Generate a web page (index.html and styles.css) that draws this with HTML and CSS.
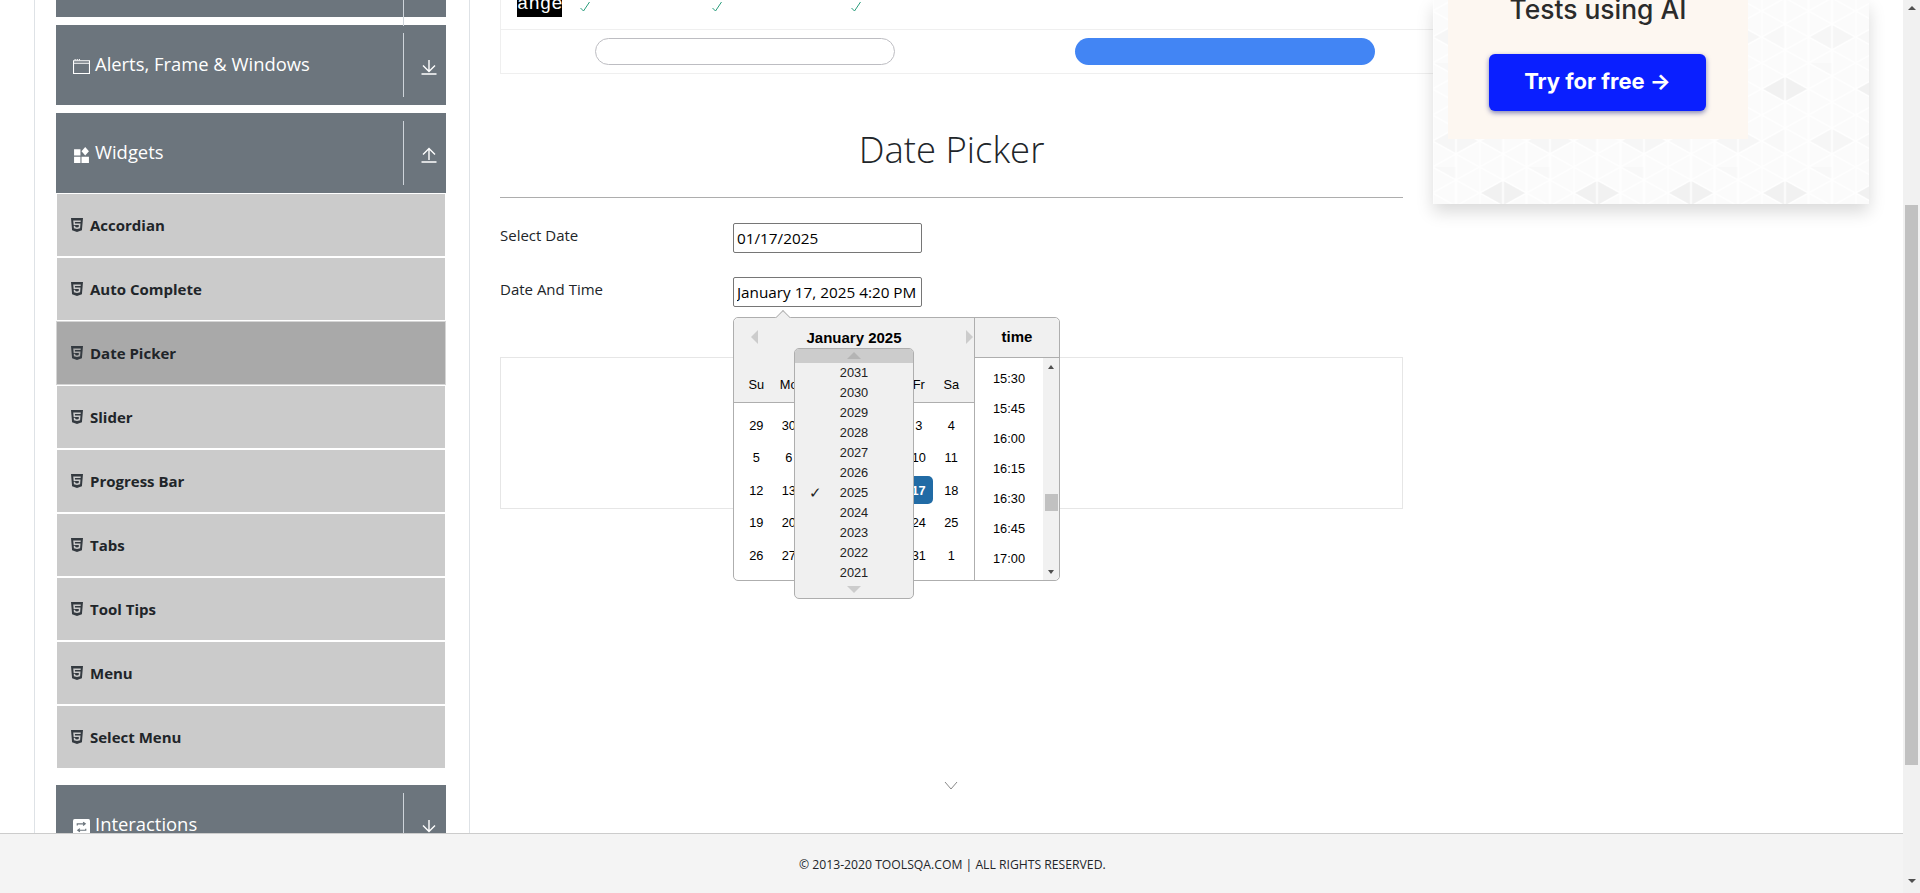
FILE: index.html
```html
<!DOCTYPE html>
<html>

<head>
    <meta charset='utf-8'>
    <title>ToolsQA - Date Picker</title>
    <link rel="stylesheet" href="styles.css">
</head>

<body>
  <svg class="defs" width="0" height="0">
    <symbol id="html5" viewBox="0 0 384 512">
      <path d="M0 32l34.9 395.8L191.5 480l157.6-52.2L384 32H0zm308.2 127.9H124.4l4.1 49.4h175.6l-13.6 148.4-97.9 27v.3h-1.1l-98.7-27.3-6-75.8h47.7L138 320l53.5 14.5 53.7-14.5 6-62.2H84.3L71.5 112.2h241.1l-4.4 47.7z"/>
    </symbol>
    <symbol id="arrow-down" viewBox="0 0 16 16">
      <path d="M8 1v10.500M2 6.500l6 6 6-6M.5 15h15" fill="none" stroke="#fff" stroke-width="1.400"/>
    </symbol>
    <symbol id="arrow-up" viewBox="0 0 16 16">
      <path d="M8 13V2.500M2 7.500l6-6 6 6M.5 15h15" fill="none" stroke="#fff" stroke-width="1.400"/>
    </symbol>
    <symbol id="check" viewBox="0 0 12 12">
      <path d="M1.5 7l3 3 6-9" fill="none" stroke="#2a9d7c" stroke-width="1"/>
    </symbol>
  </svg>

  <div class="page">
    <div class="frame">
      <div class="main">

        <div class="sidebar">
          <div class="group-head group-head-cut">
            <span class="head-title"></span>
            <span class="head-toggle"></span>
          </div>

          <div class="group-head">
            <span class="head-title">
              <svg class="head-icon" viewBox="0 0 16 16"><path d="M.5 2.500h15v12H.5zM.5 5h15" fill="none" stroke="#fff"/><path d="M1.500 1h1v1h-1zM3.500 1h1v1h-1zM5.500 1h1v1h-1z" fill="#fff"/></svg>
              Alerts, Frame &amp; Windows
            </span>
            <span class="head-toggle"><svg class="toggle-icon"><use href="#arrow-down"/></svg></span>
          </div>

          <div class="group-head group-open">
            <span class="head-title">
              <svg class="head-icon" viewBox="0 0 16 16"><path d="M1 3h6v6H1zM1 10h6v6H1zM8 10h7v6H8zM11.500 1l3.500 4-3.500 4L8 5z" fill="#fff"/></svg>
              Widgets
            </span>
            <span class="head-toggle"><svg class="toggle-icon"><use href="#arrow-up"/></svg></span>
          </div>
          <ul class="item-list">
            <li class="item"><svg class="item-icon"><use href="#html5"/></svg>Accordian</li>
            <li class="item"><svg class="item-icon"><use href="#html5"/></svg>Auto Complete</li>
            <li class="item item-active"><svg class="item-icon"><use href="#html5"/></svg>Date Picker</li>
            <li class="item"><svg class="item-icon"><use href="#html5"/></svg>Slider</li>
            <li class="item"><svg class="item-icon"><use href="#html5"/></svg>Progress Bar</li>
            <li class="item"><svg class="item-icon"><use href="#html5"/></svg>Tabs</li>
            <li class="item"><svg class="item-icon"><use href="#html5"/></svg>Tool Tips</li>
            <li class="item"><svg class="item-icon"><use href="#html5"/></svg>Menu</li>
            <li class="item"><svg class="item-icon"><use href="#html5"/></svg>Select Menu</li>
          </ul>

          <div class="group-head">
            <span class="head-title">
              <svg class="head-icon" viewBox="0 0 16 16"><rect y="1" width="16" height="15" rx="1.500" fill="#fff"/><path d="M4 7V5.500h7M9.500 4l2 1.500-2 1.500M12 10v1.500H5M6.500 10l-2 1.500 2 1.500" fill="none" stroke="#6c757d" stroke-width="1.100"/></svg>
              Interactions
            </span>
            <span class="head-toggle"><svg class="toggle-icon"><use href="#arrow-down"/></svg></span>
          </div>
        </div>

        <div class="content">
          <div class="compare">
            <div class="compare-row">
              <span class="compare-tag">ange</span>
              <svg class="tick tick-a"><use href="#check"/></svg>
              <svg class="tick tick-b"><use href="#check"/></svg>
              <svg class="tick tick-c"><use href="#check"/></svg>
            </div>
            <div class="compare-foot">
              <span class="pill pill-outline"></span>
              <span class="pill pill-blue"></span>
            </div>
          </div>

          <div class="section">
            <h1 class="title">Date Picker</h1>

            <div class="date-row">
              <label class="date-label">Select Date</label>
              <input class="date-input" type="text" value="01/17/2025">
            </div>

            <div class="date-row date-row-open">
              <label class="date-label">Date And Time</label>
              <input class="date-input" type="text" value="January 17, 2025 4:20 PM">

              <div class="picker">
                <span class="picker-tip"></span>
                <div class="month">
                  <div class="month-head">
                    <div class="month-nav">
                      <span class="nav-prev"></span>
                      <span class="month-name">January 2025</span>
                      <span class="nav-next"></span>
                    </div>
                    <div class="day-grid day-names">
                      <span>Su</span><span>Mo</span><span>Tu</span><span>We</span><span>Th</span><span>Fr</span><span>Sa</span>
                    </div>
                  </div>
                  <div class="day-grid days">
                    <span>29</span><span>30</span><span>31</span><span>1</span><span>2</span><span>3</span><span>4</span>
                    <span>5</span><span>6</span><span>7</span><span>8</span><span>9</span><span>10</span><span>11</span>
                    <span>12</span><span>13</span><span>14</span><span>15</span><span>16</span><span class="day-selected">17</span><span>18</span>
                    <span>19</span><span>20</span><span>21</span><span>22</span><span>23</span><span>24</span><span>25</span>
                    <span>26</span><span>27</span><span>28</span><span>29</span><span>30</span><span>31</span><span>1</span>
                  </div>
                </div>

                <div class="time">
                  <div class="time-head">time</div>
                  <div class="time-body">
                    <ul class="time-list">
                      <li>15:30</li><li>15:45</li><li>16:00</li><li>16:15</li><li>16:30</li><li>16:45</li><li>17:00</li>
                    </ul>
                    <div class="time-scroll">
                      <span class="mini-up"></span>
                      <span class="mini-thumb"></span>
                      <span class="mini-down"></span>
                    </div>
                  </div>
                </div>

                <div class="years">
                  <div class="years-up"><span></span></div>
                  <div class="year">2031</div>
                  <div class="year">2030</div>
                  <div class="year">2029</div>
                  <div class="year">2028</div>
                  <div class="year">2027</div>
                  <div class="year">2026</div>
                  <div class="year year-current">2025</div>
                  <div class="year">2024</div>
                  <div class="year">2023</div>
                  <div class="year">2022</div>
                  <div class="year">2021</div>
                  <div class="years-down"><span></span></div>
                </div>
              </div>
            </div>

            <div class="ad-box"></div>
            <svg class="chevron" viewBox="0 0 14 10"><path d="M1 1l6 7 6-7" fill="none" stroke="#888" stroke-width="1"/></svg>
          </div>
        </div>

        <div class="ad">
          <svg class="ad-pattern" width="100%" height="100%">
            <defs>
              <pattern id="tri" width="94" height="104" patternUnits="userSpaceOnUse" patternTransform="translate(46.500 63)">
                <rect width="94" height="104" fill="#fbfbfb"/>
                <path d="M0 26L23.500 13V39zM23.500 13L47 26 23.500 39z" fill="#f1f1f1"/>
                <path d="M47 78L70.500 65V91zM70.500 65L94 78 70.500 91z" fill="#f6f6f6"/>
                <path d="M47 0L70.500 13V-13zM0 78L23.500 91V65z" fill="#f8f8f8"/>
                <path d="M0 0v104M23.500 0v104M47 0v104M70.500 0v104M0 -52L94 0M0 -26L94 26M0 0L94 52M0 26L94 78M0 52L94 104M0 78L94 130M0 0L94 -52M0 26L94 -26M0 52L94 0M0 78L94 26M0 104L94 52M0 130L94 78" stroke="#fff" stroke-width="1.500" fill="none"/>
              </pattern>
            </defs>
            <rect width="100%" height="100%" fill="url(#tri)"/>
          </svg>
          <div class="ad-card">
            <div class="ad-text">Tests using AI</div>
            <div class="ad-btn">Try for free →</div>
          </div>
        </div>

      </div>

      <footer class="footer">© 2013-2020 TOOLSQA.COM | ALL RIGHTS RESERVED.</footer>
    </div>

    <div class="page-scroll">
      <span class="page-up"></span>
      <span class="page-thumb"></span>
      <span class="page-down"></span>
    </div>
  </div>
</body>

</html>
```

FILE: styles.css
```css
* {
  box-sizing: border-box;
}

body {
  margin: 0;
  height: 100vh;
  overflow: hidden;
  font-family: "Open Sans", sans-serif;
  color: #212529;
  background-color: #fff;
}

.defs {
  position: absolute;
}

.page {
  display: flex;
  height: 100%;
}

.frame {
  flex: 1;
  min-width: 0;
  display: flex;
  flex-direction: column;
}

.main {
  flex: 1;
  min-height: 0;
  overflow: hidden;
  display: flex;
  align-items: flex-start;
  padding-left: 34px;
}

/* sidebar */
.sidebar {
  width: 436px;
  min-height: 100%;
  flex-shrink: 0;
  padding: 0 23px 0 21px;
  border-left: 1px solid #dee2e6;
  border-right: 1px solid #dee2e6;
}

.group-head {
  height: 80px;
  margin-bottom: 8px;
  padding: 8px 0;
  display: flex;
  background-color: #6c757d;
  color: #fff;
  font-size: 18.400px;
}

.group-head-cut {
  height: 17px;
  padding: 0 0 8px;
}

.group-open {
  margin-bottom: 0;
}

.head-title {
  flex: 1;
  display: flex;
  align-items: center;
  gap: 5px;
  padding-left: 17px;
  padding-bottom: 3px;
}

.head-icon {
  width: 17px;
  height: 17px;
  margin-top: 6px;
}

.head-toggle {
  width: 43px;
  border-left: 1px solid #ced4da;
  padding: 26px 0 0 17px;
}

.toggle-icon {
  width: 16px;
  height: 16px;
  display: block;
}

.item-list {
  list-style: none;
  margin: 0 0 17px;
  padding: 1px 1px 0;
}

.item {
  height: 62px;
  margin-bottom: 2px;
  padding: 0 0 0 14px;
  display: flex;
  align-items: center;
  gap: 7px;
  background-color: #cbcbcb;
  font-size: 15px;
  font-weight: 700;
}

.item-active {
  background-color: #a9a9a9;
  outline: 1px solid #d5d5d5;
}

.item-icon {
  width: 12px;
  height: 16px;
  fill: #343a40;
}

/* middle column */
.content {
  width: 933px;
  flex-shrink: 0;
  margin-left: 30px;
}

.compare {
  border-left: 1px solid #efefef;
  height: 74px;
}

.compare-row {
  height: 30px;
  border-bottom: 1px solid #efefef;
  position: relative;
}

.compare-tag {
  display: block;
  width: 45px;
  height: 17px;
  margin-left: 16px;
  overflow: hidden;
  background-color: #000;
  color: #fff;
  font-family: "Liberation Mono", monospace;
  font-size: 19px;
  line-height: 8px;
  text-align: center;
}

.tick {
  position: absolute;
  top: 1px;
  width: 12px;
  height: 12px;
}

.tick-a {
  left: 78px;
}

.tick-b {
  left: 210px;
}

.tick-c {
  left: 349px;
}

.compare-foot {
  height: 44px;
  border-bottom: 1px solid #efefef;
  padding: 8px 0 0 94px;
  display: flex;
  gap: 180px;
}

.pill {
  width: 300px;
  height: 27px;
  border-radius: 14px;
}

.pill-outline {
  border: 1px solid #bdbdc2;
}

.pill-blue {
  background-color: #4285f4;
}

.section {
  width: 903px;
}

.title {
  margin: 47px 0 0;
  padding-bottom: 20px;
  border-bottom: 1px solid #adadad;
  text-align: center;
  font-size: 36.500px;
  font-weight: 300;
  line-height: 56px;
}

.date-row {
  position: relative;
  display: flex;
  margin-top: 25px;
  font-size: 15px;
}

.date-row-open {
  margin-top: 24px;
}

.date-label {
  width: 233px;
  line-height: 24px;
}

.date-input {
  width: 189px;
  height: 30px;
  padding: 1px 3px;
  border: 1px solid #767676;
  border-radius: 2px;
  font-family: "Open Sans", sans-serif;
  font-size: 15.300px;
  color: #000;
}

.ad-box {
  height: 152px;
  margin-top: 50px;
  border: 1px solid #e6e6e6;
}

.chevron {
  display: block;
  width: 14px;
  height: 10px;
  margin: 272px 0 0 444px;
}

/* date picker popup */
.picker {
  position: absolute;
  left: 233px;
  top: 40px;
  width: 327px;
  height: 264px;
  display: flex;
  background-color: #fff;
  border: 1px solid #aeaeae;
  border-radius: 5px;
  font-family: "Liberation Sans", Arial, sans-serif;
  font-size: 12.800px;
  color: #000;
}

.picker-tip {
  position: absolute;
  left: 42px;
  top: -7px;
  width: 14px;
  height: 14px;
  background-color: #f0f0f0;
  border-left: 1px solid #aeaeae;
  border-top: 1px solid #aeaeae;
  transform: rotate(45deg) scale(.8);
}

.month {
  width: 241px;
  border-right: 1px solid #aeaeae;
}

.month-head {
  position: relative;
  height: 85px;
  padding-top: 8px;
  background-color: #f0f0f0;
  border-bottom: 1px solid #aeaeae;
  border-top-left-radius: 5px;
}

.month-nav {
  display: grid;
  grid-template-columns: 1fr auto 1fr;
  align-items: center;
  padding: 0 1px;
  height: 22px;
}

.nav-prev,
.nav-next {
  width: 0;
  height: 0;
  border-top: 7px solid transparent;
  border-bottom: 7px solid transparent;
}

.nav-prev {
  margin-left: 16px;
  border-right: 7px solid #ccc;
}

.nav-next {
  justify-self: end;
  border-left: 7px solid #ccc;
}

.month-name,
.time-head {
  font-size: 15px;
  font-weight: 700;
}

.day-grid {
  display: grid;
  grid-template-columns: repeat(7, 32.500px);
  padding-left: 6px;
  text-align: center;
}

.day-names {
  margin-top: 27px;
  line-height: 20px;
}

.days {
  grid-auto-rows: 32.500px;
  padding-top: 6px;
}

.days span {
  display: flex;
  align-items: center;
  justify-content: center;
}

.days .day-selected {
  width: 28px;
  height: 28px;
  margin: 2px;
  background-color: #216ba5;
  border-radius: 5px;
  color: #fff;
  font-weight: 700;
}

.time {
  flex: 1;
  display: flex;
  flex-direction: column;
}

.time-head {
  height: 40px;
  line-height: 38px;
  text-align: center;
  background-color: #f0f0f0;
  border-bottom: 1px solid #aeaeae;
  border-top-right-radius: 5px;
}

.time-body {
  flex: 1;
  display: flex;
}

.time-list {
  flex: 1;
  list-style: none;
  margin: 0;
  padding: 6px 0 0;
  text-align: center;
}

.time-list li {
  height: 30px;
  line-height: 30px;
}

.time-scroll {
  width: 16px;
  display: flex;
  flex-direction: column;
  align-items: center;
  background-color: #f1f1f1;
  border-bottom-right-radius: 5px;
}

.mini-up,
.mini-down {
  width: 0;
  height: 0;
  border-left: 3.500px solid transparent;
  border-right: 3.500px solid transparent;
}

.mini-up {
  margin-top: 7px;
  border-bottom: 4px solid #505050;
}

.mini-thumb {
  width: 13px;
  height: 17px;
  margin-top: 125px;
  background-color: #c1c1c1;
}

.mini-down {
  margin-top: 59px;
  border-top: 4px solid #505050;
}

.years {
  position: absolute;
  left: 60px;
  top: 30px;
  width: 120px;
  height: 251px;
  background-color: #f0f0f0;
  border: 1px solid #aeaeae;
  border-radius: 5px;
  text-align: center;
}

.years-up {
  height: 14px;
  background-color: #ccc;
  border-radius: 4px 4px 0 0;
  padding-top: 3px;
}

.years-up span,
.years-down span {
  display: block;
  width: 0;
  height: 0;
  margin: 0 auto;
  border-left: 7px solid transparent;
  border-right: 7px solid transparent;
}

.years-up span {
  border-bottom: 7px solid #b4b4b4;
}

.years-down {
  padding-top: 3px;
}

.years-down span {
  border-top: 7px solid #ccc;
}

.year {
  position: relative;
  height: 20px;
  line-height: 20px;
  color: #222;
}

.year-current::before {
  content: "✓";
  position: absolute;
  left: 14px;
  top: 0;
  font-family: "DejaVu Sans", sans-serif;
  font-size: 15px;
  font-weight: 200;
}

/* right ad */
.ad {
  position: relative;
  width: 436px;
  height: 204px;
  flex-shrink: 0;
  box-shadow: 0 8px 16px rgba(0, 0, 0, .15);
}

.ad-pattern {
  position: absolute;
  left: 0;
  top: 0;
}

.ad-card {
  position: relative;
  width: 300px;
  height: 139px;
  margin-left: 15px;
  padding-top: 54px;
  background-color: #fdf7f1;
}

.ad-text {
  position: absolute;
  left: 0;
  right: 0;
  top: -6px;
  text-align: center;
  font-family: Inter, sans-serif;
  font-size: 26.400px;
  font-weight: 500;
  line-height: 30px;
  color: #2b2b2b;
}

.ad-btn {
  width: 217px;
  height: 57px;
  margin-left: 41px;
  background-color: #0a1fff;
  border-radius: 6px;
  box-shadow: 0 2px 5px rgba(10, 20, 120, .5);
  color: #fff;
  font-family: Inter, sans-serif;
  font-size: 22px;
  font-weight: 700;
  line-height: 54px;
  text-align: center;
}

/* footer */
.footer {
  height: 60px;
  flex-shrink: 0;
  padding-left: 799px;
  border-top: 1px solid #ccc;
  background-color: #f4f4f4;
  font-size: 12.200px;
  line-height: 62px;
}

/* page scrollbar */
.page-scroll {
  width: 17px;
  flex-shrink: 0;
  display: flex;
  flex-direction: column;
  align-items: center;
  background-color: #f1f1f1;
}

.page-up,
.page-down {
  width: 0;
  height: 0;
  border-left: 4px solid transparent;
  border-right: 4px solid transparent;
}

.page-up {
  margin-top: 6px;
  border-bottom: 4px solid #505050;
}

.page-thumb {
  width: 13px;
  height: 560px;
  margin-top: 195px;
  background-color: #c1c1c1;
}

.page-down {
  margin-top: 114px;
  border-top: 4px solid #505050;
}
```
